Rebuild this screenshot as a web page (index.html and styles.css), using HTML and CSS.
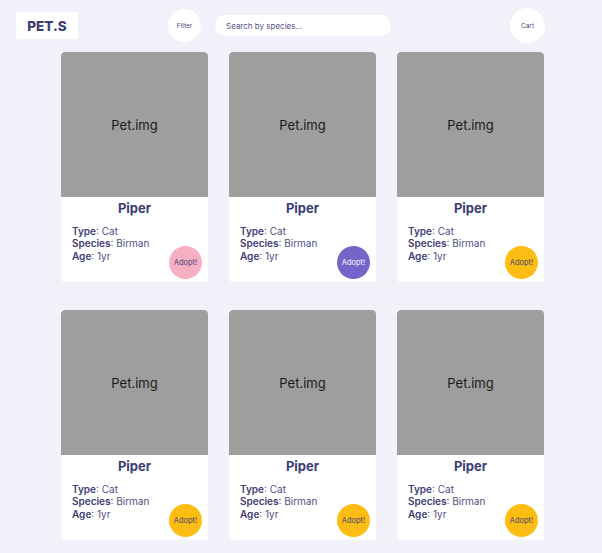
FILE: index.html
```html
<!DOCTYPE html>
<html>
<head>
<meta charset="utf-8">
<link rel="stylesheet" href="styles.css">
</head>
<body>
<header class="topbar">
  <div class="logo">PET.S</div>
  <button class="round-btn filter">Filter</button>
  <input class="search" type="text" placeholder="Search by species...">
  <button class="round-btn cart">Cart</button>
</header>
<main class="grid">
  <div class="card">
    <div class="pet-img">Pet.img</div>
    <div class="name">Piper</div>
    <div class="info-row">
      <div class="details">
        <div><b>Type</b>: Cat</div>
        <div><b>Species</b>: Birman</div>
        <div><b>Age</b>: 1yr</div>
      </div>
      <button class="adopt pink">Adopt!</button>
    </div>
  </div>
  <div class="card">
    <div class="pet-img">Pet.img</div>
    <div class="name">Piper</div>
    <div class="info-row">
      <div class="details">
        <div><b>Type</b>: Cat</div>
        <div><b>Species</b>: Birman</div>
        <div><b>Age</b>: 1yr</div>
      </div>
      <button class="adopt purple">Adopt!</button>
    </div>
  </div>
  <div class="card">
    <div class="pet-img">Pet.img</div>
    <div class="name">Piper</div>
    <div class="info-row">
      <div class="details">
        <div><b>Type</b>: Cat</div>
        <div><b>Species</b>: Birman</div>
        <div><b>Age</b>: 1yr</div>
      </div>
      <button class="adopt yellow">Adopt!</button>
    </div>
  </div>
  <div class="card">
    <div class="pet-img">Pet.img</div>
    <div class="name">Piper</div>
    <div class="info-row">
      <div class="details">
        <div><b>Type</b>: Cat</div>
        <div><b>Species</b>: Birman</div>
        <div><b>Age</b>: 1yr</div>
      </div>
      <button class="adopt yellow">Adopt!</button>
    </div>
  </div>
  <div class="card">
    <div class="pet-img">Pet.img</div>
    <div class="name">Piper</div>
    <div class="info-row">
      <div class="details">
        <div><b>Type</b>: Cat</div>
        <div><b>Species</b>: Birman</div>
        <div><b>Age</b>: 1yr</div>
      </div>
      <button class="adopt yellow">Adopt!</button>
    </div>
  </div>
  <div class="card">
    <div class="pet-img">Pet.img</div>
    <div class="name">Piper</div>
    <div class="info-row">
      <div class="details">
        <div><b>Type</b>: Cat</div>
        <div><b>Species</b>: Birman</div>
        <div><b>Age</b>: 1yr</div>
      </div>
      <button class="adopt yellow">Adopt!</button>
    </div>
  </div>
</main>
</body>
</html>
```
FILE: styles.css
```css
* { box-sizing: border-box; }
html, body {
  margin: 0;
  padding: 0;
  background: #f1f1f9;
  font-family: Inter, "Noto Sans", sans-serif;
  color: #3e3c75;
}
.topbar {
  display: flex;
  align-items: center;
  height: 51px;
  padding: 0 16px;
}
.logo {
  width: 62px;
  height: 27px;
  background: #fff;
  border-radius: 3px;
  display: flex;
  align-items: center;
  justify-content: center;
  font-weight: 800;
  font-size: 13.5px;
  color: #3e3c75;
}
.round-btn {
  border: none;
  background: #fff;
  border-radius: 50%;
  font-family: Inter, sans-serif;
  font-size: 6.5px;
  color: #4a4880;
  padding: 0;
}
.filter {
  width: 33px;
  height: 33px;
  margin-left: 90px;
}
.search {
  margin-left: 14px;
  width: 176px;
  height: 21px;
  border: none;
  border-radius: 11px;
  background: #fff;
  padding: 0 11px;
  font-family: Inter, sans-serif;
  font-size: 8px;
  color: #4a4880;
  outline: none;
}
.search::placeholder { color: #55538a; }
.cart {
  width: 35px;
  height: 35px;
  margin-left: 119px;
}
.grid {
  display: grid;
  grid-template-columns: repeat(3, 147px);
  column-gap: 21px;
  row-gap: 28px;
  padding-left: 61px;
  margin-top: 1px;
}
.card {
  height: 230px;
  background: #fff;
  border-radius: 4px;
  display: flex;
  flex-direction: column;
  overflow: hidden;
}
.pet-img {
  height: 145px;
  background: #9e9e9e;
  border-radius: 4px 4px 0 0;
  display: flex;
  align-items: center;
  justify-content: center;
  font-size: 13px;
  color: #1a1a1a;
}
.name {
  margin-top: 3px;
  text-align: center;
  font-weight: 700;
  font-size: 13px;
  line-height: 16px;
  color: #3e3c75;
}
.info-row {
  flex: 1;
  display: flex;
  justify-content: space-between;
  padding: 9px 6px 3px 11px;
}
.details {
  font-size: 10px;
  line-height: 12.3px;
  color: #4f4d82;
}
.details b {
  font-weight: 600;
  color: #3e3c75;
}
.adopt {
  align-self: flex-end;
  width: 33px;
  height: 33px;
  border: none;
  border-radius: 50%;
  padding: 0;
  font-family: Inter, sans-serif;
  font-size: 7.5px;
  color: #3e3c75;
}
.pink { background: #f7afc4; }
.purple { background: #7664c8; color: #fff; }
.yellow { background: #fdbd12; }
```
